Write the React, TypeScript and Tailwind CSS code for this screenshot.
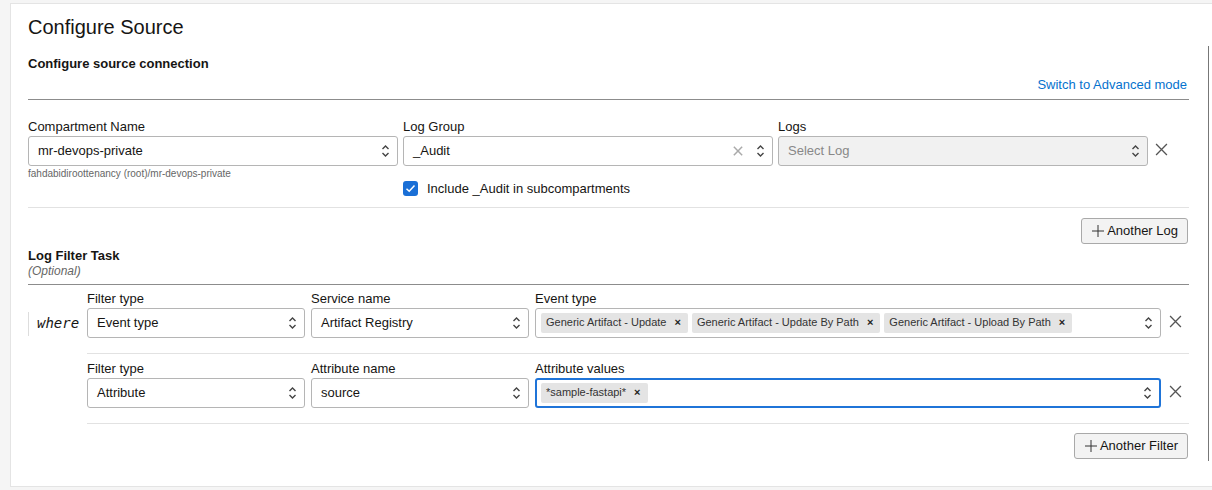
import type { ReactNode } from 'react';

const font = { fontFamily: '"Liberation Sans", Arial, Helvetica, sans-serif' };

function Arrows() {
  return (
    <svg width="9" height="14" viewBox="0 0 9 14" className="shrink-0">
      <path d="M1.5 5 L4.5 2 L7.5 5" fill="none" stroke="#444" strokeWidth="1.4" />
      <path d="M1.5 9 L4.5 12 L7.5 9" fill="none" stroke="#444" strokeWidth="1.4" />
    </svg>
  );
}

function CloseX({ size = 13, color = '#555', stroke = 1.2 }: { size?: number; color?: string; stroke?: number }) {
  return (
    <svg width={size} height={size} viewBox="0 0 12 12" className="shrink-0">
      <path d="M1 1 L11 11 M11 1 L1 11" stroke={color} strokeWidth={stroke} fill="none" />
    </svg>
  );
}

function Select({
  value,
  placeholder,
  disabled,
  clear,
  focused,
  children,
}: {
  value?: string;
  placeholder?: string;
  disabled?: boolean;
  clear?: boolean;
  focused?: boolean;
  children?: ReactNode;
}) {
  return (
    <div
      className={
        'h-[30px] rounded-[3px] flex items-center pr-[7px] ' +
        (focused
          ? 'border-2 border-[#1f74d8] pl-[4px] '
          : 'border border-[#b5b5b5] ' + (children ? 'pl-[5px] ' : 'pl-[9px] ')) +
        (disabled ? 'bg-[#f1f1f1]' : 'bg-white')
      }
    >
      <div className="flex-1 flex items-center gap-[4px] min-w-0">
        {children ? (
          children
        ) : value ? (
          <span className="text-[13px] text-[#161513]">{value}</span>
        ) : (
          <span className="text-[13px] text-[#888]">{placeholder}</span>
        )}
      </div>
      {clear && (
        <span className="mr-[13px]">
          <CloseX size={10} color="#aaa" stroke={1.8} />
        </span>
      )}
      <Arrows />
    </div>
  );
}

function Chip({ label }: { label: string }) {
  return (
    <div className="h-[20px] bg-[#e4e4e4] rounded-[2px] flex items-center pl-[5px] pr-[7px] gap-[8px]">
      <span className="text-[11px] text-[#333]">{label}</span>
      <span className="text-[11px] font-bold text-[#222] leading-none">×</span>
    </div>
  );
}

function Field({ label, children }: { label: string; children: ReactNode }) {
  return (
    <div className="flex flex-col">
      <div className="text-[13px] leading-[16px] text-[#161513] mb-[1px]">{label}</div>
      {children}
    </div>
  );
}

function PlusButton({ label }: { label: string }) {
  return (
    <button className="h-[26px] px-[9px] rounded-[3px] border border-[#a9a9a9] bg-[#f3f3f3] flex items-center gap-[2px] text-[13px] text-[#161513]">
      <svg width="14" height="14" viewBox="0 0 14 14">
        <path d="M7 1 V13 M1 7 H13" stroke="#333" strokeWidth="1" />
      </svg>
      {label}
    </button>
  );
}

export default function App() {
  return (
    <div className="w-[1212px] h-[490px] bg-[#f5f5f5] pt-[3px] pl-[10px] overflow-hidden" style={font}>
      <div className="relative h-[484px] bg-white border border-r-0 border-[#e4e4e4] pl-[17px] pr-[23px]">
        {/* scroll thumb */}
        <div className="absolute right-[3px] top-[42px] h-[415px] w-[1px] bg-[#777]" />

        <h1 className="mt-[11px] text-[20px] leading-[24px] text-[#161513]">Configure Source</h1>
        <div className="mt-[17px] text-[13px] leading-[16px] font-bold text-[#161513]">Configure source connection</div>
        <div className="mt-[5px] flex justify-end pr-[2px]">
          <a className="text-[13px] leading-[16px] text-[#0572ce]">Switch to Advanced mode</a>
        </div>
        <div className="mt-[6px] h-[1px] bg-[#8c8c8c]" />

        <div className="mt-[19px] flex">
          <div className="flex-1 grid grid-cols-3 gap-[5px]">
            <div>
              <Field label="Compartment Name">
                <Select value="mr-devops-private" />
              </Field>
              <div className="mt-[2px] text-[10px] leading-[12px] text-[#666]">
                fahdabidiroottenancy (root)/mr-devops-private
              </div>
            </div>
            <div>
              <Field label="Log Group">
                <Select value="_Audit" clear />
              </Field>
              <label className="mt-[13px] flex items-center gap-[9px]">
                <span className="w-[15px] h-[15px] rounded-[3px] bg-[#1a6fd6] flex items-center justify-center">
                  <svg width="11" height="11" viewBox="0 0 11 11">
                    <path d="M1.5 5.8 L4.2 8.3 L9.5 2.5" fill="none" stroke="white" strokeWidth="1.5" />
                  </svg>
                </span>
                <span className="text-[13px] text-[#161513]">Include _Audit in subcompartments</span>
              </label>
            </div>
            <Field label="Logs">
              <Select placeholder="Select Log" disabled />
            </Field>
          </div>
          <div className="w-[41px] pt-[24px] pl-[7px]">
            <CloseX />
          </div>
        </div>

        <div className="mt-[8px] h-[1px] bg-[#e2e2e2]" />
        <div className="mt-[10px] flex justify-end pr-[1px]">
          <PlusButton label="Another Log" />
        </div>

        <div className="mt-[4px] text-[13px] leading-[16px] font-bold text-[#161513]">Log Filter Task</div>
        <div className="text-[12px] leading-[14px] italic text-[#666]">(Optional)</div>
        <div className="mt-[6px] h-[1px] bg-[#8c8c8c]" />

        {/* filter row 1 */}
        <div className="mt-[6px] flex items-start">
          <div className="w-[59px] pt-[21px] flex items-center">
            <div className="w-[1px] h-[24px] bg-[#ddd]" />
            <span
              className="ml-[8px] italic text-[14px] text-[#161513]"
              style={{ fontFamily: '"DejaVu Sans Mono", monospace' }}
            >
              where
            </span>
          </div>
          <div className="flex-1 flex flex-col">
            <div className="flex">
              <div className="flex-1 grid grid-cols-[218px_218px_1fr] gap-[6px]">
                <Field label="Filter type">
                  <Select value="Event type" />
                </Field>
                <Field label="Service name">
                  <Select value="Artifact Registry" />
                </Field>
                <Field label="Event type">
                  <Select>
                    <Chip label="Generic Artifact - Update" />
                    <Chip label="Generic Artifact - Update By Path" />
                    <Chip label="Generic Artifact - Upload By Path" />
                  </Select>
                </Field>
              </div>
              <div className="w-[28px] pt-[24px] pl-[8px]">
                <CloseX />
              </div>
            </div>
            <div className="mt-[15px] h-[1px] bg-[#e2e2e2]" />

            {/* filter row 2 */}
            <div className="mt-[7px] flex">
              <div className="flex-1 grid grid-cols-[218px_218px_1fr] gap-[6px]">
                <Field label="Filter type">
                  <Select value="Attribute" />
                </Field>
                <Field label="Attribute name">
                  <Select value="source" />
                </Field>
                <Field label="Attribute values">
                  <Select focused>
                    <Chip label="*sample-fastapi*" />
                  </Select>
                </Field>
              </div>
              <div className="w-[28px] pt-[24px] pl-[8px]">
                <CloseX />
              </div>
            </div>
            <div className="mt-[15px] h-[1px] bg-[#e2e2e2]" />
            <div className="mt-[9px] flex justify-end pr-[1px]">
              <PlusButton label="Another Filter" />
            </div>
          </div>
        </div>
      </div>
    </div>
  );
}
